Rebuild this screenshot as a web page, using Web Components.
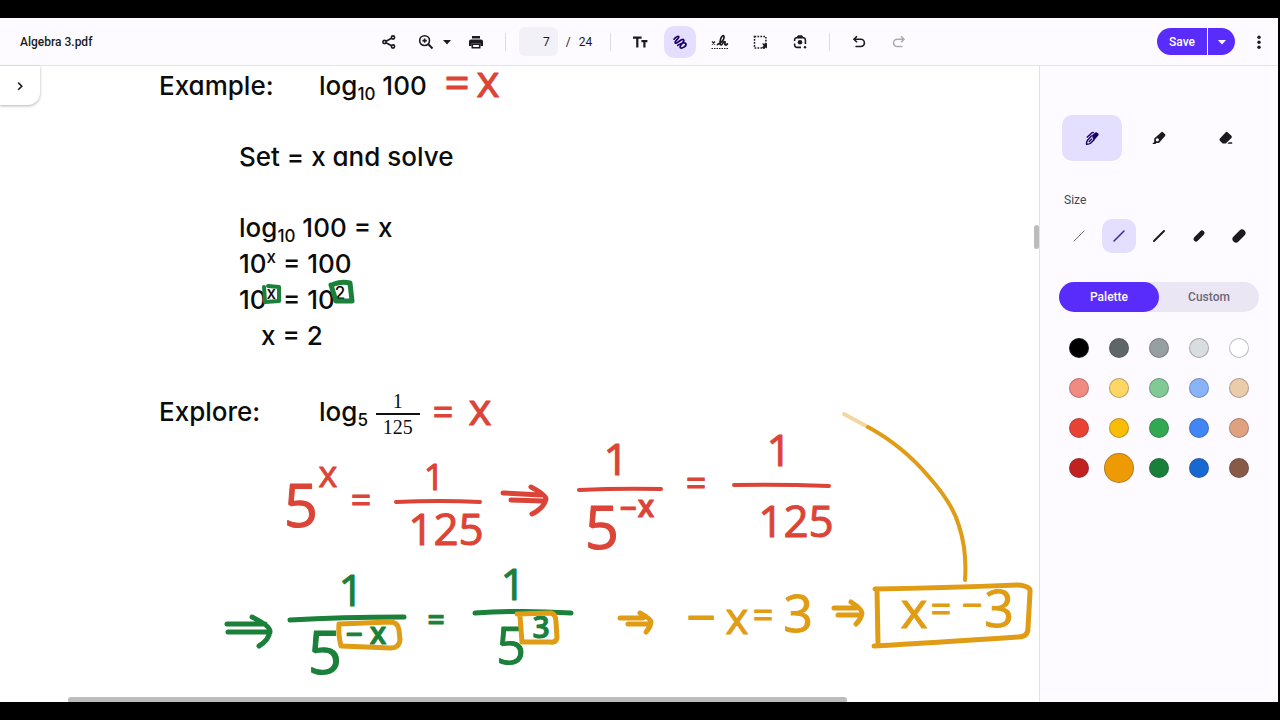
<!DOCTYPE html>
<html lang="en">
<head>
<meta charset="utf-8">
<meta name="viewport" content="width=device-width, initial-scale=1">
<title>Algebra 3.pdf</title>
<style>
  body {
    margin: 0;
    background: #000;
    font-family: Roboto, "Liberation Sans", sans-serif;
  }
</style>
</head>
<body>
<pdf-app>
  <pdf-toolbar slot="toolbar" name="Algebra 3.pdf" page="7" pages="24"></pdf-toolbar>
  <pdf-page slot="page">
    <ink-layer slot="ink"></ink-layer>
  </pdf-page>
  <ink-panel slot="panel"></ink-panel>
</pdf-app>

<script>
/**
 * html is a template tag used to construct a <template>.
 * @param {TemplateStringsArray} strings
 */
function html(strings, ...values) {
  const template = document.createElement("template");
  template.innerHTML = String.raw(strings, ...values);
  return template;
}

function mount(el, template) {
  el.attachShadow({ mode: "open" }).appendChild(template.content.cloneNode(true));
}

// Icons are drawn on a 20px grid, "s" = stroked, "f" = filled.
const icons = {
  share: `<g class="s"><circle cx="5.500" cy="10" r="1.600"/><circle cx="14" cy="5.500" r="1.600"/><circle cx="14" cy="14.500" r="1.600"/><path d="M7 9.200l5.500-3M7 10.800l5.500 3"/></g>`,
  zoom: `<g class="s"><circle cx="8.6" cy="8.6" r="4.9"/><path d="M12.3 12.3l4.2 4.2" stroke-width="2"/><path d="M8.6 6.4v4.4M6.4 8.6h4.4"/></g>`,
  caret: `<path class="f" d="M6 8h8l-4 4.500z"/>`,
  print: `<path class="f" d="M6 4h8v2.600H6zM5 7.400h10a2 2 0 0 1 2 2V14h-2.600v-2.600H5.600V14H3V9.400a2 2 0 0 1 2-2z"/><path class="s" d="M6.300 12.200h7.400v3.600H6.300z"/>`,
  text: `<path class="s" stroke-width="2.200" d="M3 5.600h8.600M7.300 5.600v10M11.400 9.200h6M14.400 9.200v6.400"/>`,
  draw: `<path class="s" stroke-linecap="round" stroke-width="1.700" d="M4 7.200C5.500 5.500 7.800 3.600 8.700 4.600C9.900 6 4.200 9.300 5.200 10.900C6.400 12.600 11.400 6.200 13.600 7.600C15.700 9 8.600 13.800 10.300 15.600C11.800 17 16.600 14.200 16 11.900C15.400 9.900 11 10.900 7.800 13.400"/>`,
  sign: `<path class="s" stroke-width="1.200" d="M2 9.500l3 3M5 9.500l-3 3"/><path class="s" stroke-dasharray="1.500 1" stroke-width="1.200" d="M1.500 16.500h17"/><path class="s" stroke-linecap="round" stroke-width="1.700" d="M7.500 12.500c4-1.500 7-5 6.500-8-.5-2-3 0-3.500 3-.6 3-.8 5.500.6 5.500 1.600 0 2-3.500 3.500-3.500 1.300 0-.6 3.500.8 3.500.8 0 1.400-.5 2-1"/>`,
  select: `<path class="s" stroke-dasharray="1.700 1.250" stroke-width="1.500" d="M4.500 4.500h11.400v11.400H4.500z"/><path class="f" d="M12 11.600h5v5l-1.600-1.300-1.800 1.800-1.700-1.700 1.700-1.700z"/>`,
  lens: `<circle class="f" cx="10" cy="10.300" r="2.300"/><circle class="f" cx="15" cy="15.300" r="1.200"/><path class="s" d="M4.600 9V8a2.400 2.400 0 0 1 2.400-2.400h6A2.400 2.400 0 0 1 15.400 8v4M4.600 11.500V13A2.400 2.400 0 0 0 7 15.400h4M7.500 5.200l1-1.200h3l1 1.200"/>`,
  undo: `<path class="s" d="M8 4.300L5 7.300l3 3M5.300 7.300h6.500a3.600 3.600 0 0 1 0 7.200H6.500"/>`,
  redo: `<path class="s" d="M12 4.300l3 3-3 3M14.700 7.300H8.200a3.600 3.600 0 0 0 0 7.200h5.300"/>`,
  more: `<g class="f"><circle cx="10" cy="5.200" r="1.700"/><circle cx="10" cy="10.200" r="1.700"/><circle cx="10" cy="15.200" r="1.700"/></g>`,
  chevron: `<path class="s" d="M8.200 6.600l3.600 3.600-3.600 3.600"/>`,
  pen: `<path class="f" d="M10 7.200l3.300-2.700q1-.7 2 .2l.9.900q.8 1 .1 2L11.500 13z"/><path class="s" stroke-linejoin="round" stroke-width="1.400" d="M9.800 7.600l-4.300 4.600q-1.200 1.400-1 4 2.600.1 4-1l3.600-3.500M4.800 9.600l5.200-4.800q.8-.6 1.800.1M6.800 13.900l3.200-3.200"/>`,
  marker: `<path class="f" fill-rule="evenodd" d="M5.200 10.400l6.800-6a1.500 1.500 0 0 1 2.200 0l1.700 1.700a1.500 1.500 0 0 1 0 2.200l-6 6.800H7.200l-.7.900H3.200l2-2zM8.300 10.200a1.600 1.600 0 1 0 .1 3.200 1.600 1.600 0 0 0-.1-3.200z"/>`,
  eraser: `<path class="f" d="M9.500 4.400a1.700 1.700 0 0 1 2.300 0l3.600 3.400a1.700 1.700 0 0 1 0 2.300l-5.600 5.400H6.600l-2.700-2.700a1.700 1.700 0 0 1 0-2.300zM12.800 14.200h3.400v1.500h-4.800z"/>`,
};

class AppIcon extends HTMLElement {
  static observedAttributes = ["name"];

  constructor() {
    super();
    this.attachShadow({ mode: "open" });
  }

  attributeChangedCallback(attr, old, name) {
    this.shadowRoot.innerHTML = `
      <style>
        :host { display: block; width: 20px; height: 20px; }
        svg { display: block; }
        .s { fill: none; stroke: currentColor; }
        .f { fill: currentColor; }
      </style>
      <svg width="20" height="20" viewBox="0 0 20 20" stroke-width="1.600" aria-hidden="true">${icons[name] || ""}</svg>
    `;
  }
}
customElements.define("app-icon", AppIcon);

const iconButton = html`
  <style>
    :host {
      display: block;
      width: 32px;
      height: 32px;
    }

    button {
      display: flex;
      align-items: center;
      justify-content: center;
      width: 100%;
      height: 100%;
      padding: 0;
      border: 0;
      border-radius: 10px;
      background: none;
      color: #1b1b1f;
    }

    app-icon {
      flex: none;
    }

    :host([selected]) button {
      background: #e4dfff;
      color: #190064;
    }

    :host([disabled]) button {
      color: #acabb0;
    }
  </style>
  <button type="button"><app-icon></app-icon></button>
`;

class IconButton extends HTMLElement {
  constructor() {
    super();
    mount(this, iconButton);
    const button = this.shadowRoot.querySelector("button");
    button.setAttribute("aria-label", this.getAttribute("label"));
    button.setAttribute("aria-pressed", this.hasAttribute("selected"));
    button.disabled = this.hasAttribute("disabled");
    button.firstElementChild.setAttribute("name", this.getAttribute("icon"));
  }
}
customElements.define("icon-button", IconButton);

const app = html`
  <style>
    :host {
      display: grid;
      grid-template-rows: auto minmax(0, 1fr);
      grid-template-columns: minmax(0, 1fr) 239px;
      box-sizing: border-box;
      height: 100vh;
      padding: 18px 2px 18px 0;
      background: #000;
    }

    slot[name="toolbar"]::slotted(*) {
      grid-column: 1 / -1;
    }
  </style>
  <slot name="toolbar"></slot>
  <slot name="page"></slot>
  <slot name="panel"></slot>
`;

class PdfApp extends HTMLElement {
  constructor() {
    super();
    mount(this, app);
  }
}
customElements.define("pdf-app", PdfApp);

const toolbar = html`
  <style>
    :host {
      display: grid;
      grid-template-columns: minmax(0, 372fr) auto minmax(0, 362fr);
      align-items: center;
      height: 47px;
      border-bottom: 1px solid #e6e4ea;
      background: #fdfbff;
      color: #1b1b1f;
      font-size: 12px;
    }

    h1 {
      margin: 0;
      padding-left: 20px;
      font-size: 12px;
      font-weight: 500;
    }

    .tools,
    .group,
    .actions {
      display: flex;
      align-items: center;
    }

    .group {
      gap: 8px;
    }

    .zoom {
      gap: 0;
      margin: 0 8px 0 5px;
    }

    .zoom icon-button:last-child {
      width: 10px;
    }

    .rule {
      width: 1px;
      height: 18px;
      margin: 0 13px;
      background: #dddbe2;
    }

    input {
      box-sizing: border-box;
      width: 39px;
      height: 29px;
      padding: 0 8px;
      border: 0;
      border-radius: 6px;
      background: #f3f1f8;
      color: inherit;
      font: inherit;
      text-align: right;
    }

    .count {
      display: flex;
      gap: 8px;
      margin: 0 5px 0 8px;
    }

    .actions {
      justify-content: flex-end;
      gap: 8px;
      padding-right: 3px;
    }

    .split {
      display: flex;
      gap: 1px;
      height: 27px;
    }

    .split button {
      display: flex;
      align-items: center;
      justify-content: center;
      padding: 0;
      border: 0;
      background: #5a2cfb;
      color: #fff;
      font: inherit;
      font-weight: 500;
    }

    .save {
      width: 50px;
      border-radius: 14px 0 0 14px;
    }

    .options {
      width: 27px;
      border-radius: 0 14px 14px 0;
    }
  </style>
  <h1></h1>
  <div class="tools">
    <icon-button icon="share" label="Share"></icon-button>
    <div class="group zoom">
      <icon-button icon="zoom" label="Zoom in"></icon-button>
      <icon-button icon="caret" label="Zoom levels"></icon-button>
    </div>
    <icon-button icon="print" label="Print"></icon-button>
    <span class="rule"></span>
    <input type="text" aria-label="Page number">
    <div class="count"><span>/</span><span class="total"></span></div>
    <span class="rule"></span>
    <div class="group">
      <icon-button icon="text" label="Add text"></icon-button>
      <icon-button icon="draw" label="Draw" selected></icon-button>
      <icon-button icon="sign" label="Signature"></icon-button>
      <icon-button icon="select" label="Select area"></icon-button>
      <icon-button icon="lens" label="Search image"></icon-button>
    </div>
    <span class="rule"></span>
    <div class="group">
      <icon-button icon="undo" label="Undo"></icon-button>
      <icon-button icon="redo" label="Redo" disabled></icon-button>
    </div>
  </div>
  <div class="actions">
    <div class="split">
      <button class="save" type="button">Save</button>
      <button class="options" type="button" aria-label="Save options"><app-icon name="caret"></app-icon></button>
    </div>
    <icon-button icon="more" label="More actions"></icon-button>
  </div>
`;

class PdfToolbar extends HTMLElement {
  constructor() {
    super();
    mount(this, toolbar);
    this.shadowRoot.querySelector("h1").textContent = this.getAttribute("name");
    this.shadowRoot.querySelector("input").value = this.getAttribute("page");
    this.shadowRoot.querySelector(".total").textContent = this.getAttribute("pages");
  }
}
customElements.define("pdf-toolbar", PdfToolbar);

const fraction = html`
  <style>
    :host {
      display: inline-flex;
      flex-direction: column;
      width: 44px;
      margin-left: 1px;
      vertical-align: middle;
      font: 20px/24px "Liberation Serif", serif;
      text-align: center;
    }

    .top {
      border-bottom: 2px solid #111;
    }
  </style>
  <span class="top"><slot name="top"></slot></span>
  <span><slot name="bottom"></slot></span>
`;

class MathFraction extends HTMLElement {
  constructor() {
    super();
    mount(this, fraction);
  }
}
customElements.define("math-fraction", MathFraction);

const page = html`
  <style>
    :host {
      position: relative;
      display: block;
      background: #fff;
      color: #0c0c0c;
      font: 500 26px/36px Inter, sans-serif;
      font-feature-settings: "cv11";
    }

    article {
      display: flex;
      flex-direction: column;
      gap: 35px;
      padding: 2px 0 0 159px;
    }

    p {
      margin: 0;
    }

    .row {
      display: grid;
      grid-template-columns: 160px auto;
      align-items: baseline;
    }

    .steps {
      padding-left: 80px;
    }

    .last {
      padding-left: 22px;
    }

    sub,
    sup {
      font-size: 17px;
      line-height: 0;
    }

    sub {
      vertical-align: -5px;
    }

    sup {
      vertical-align: 10px;
    }

    .expand {
      position: absolute;
      top: 0;
      left: 0;
      display: flex;
      align-items: center;
      justify-content: center;
      width: 40px;
      height: 39px;
      padding: 0;
      border: 0;
      border-radius: 0 0 12px 0;
      background: #fff;
      box-shadow: 0 1px 3px rgba(0, 0, 0, 0.3);
      color: #1b1b1f;
    }

    .bar {
      position: absolute;
      background: #bcbcbe;
    }

    .vertical {
      top: 25%;
      right: 0;
      width: 5px;
      height: 24px;
      border-radius: 3px;
    }

    .horizontal {
      bottom: 0;
      left: 6.5%;
      width: 75%;
      height: 5px;
      border-radius: 3px 3px 0 0;
    }
  </style>
  <article>
    <div class="row"><p>Example:</p><p>log<sub>10</sub> 100</p></div>
    <div class="steps"><p>Set = x and solve</p></div>
    <div class="steps">
      <p>log<sub>10</sub> 100 = x</p>
      <p>10<sup>x</sup> = 100</p>
      <p>10<sup>x</sup> = 10<sup>2</sup></p>
      <p class="last">x = 2</p>
    </div>
    <div class="row">
      <p>Explore:</p>
      <p>log<sub>5</sub> <math-fraction><span slot="top">1</span><span slot="bottom">125</span></math-fraction></p>
    </div>
  </article>
  <slot name="ink"></slot>
  <button class="expand" type="button" aria-label="Show sidebar"><app-icon name="chevron"></app-icon></button>
  <span class="bar vertical"></span>
  <span class="bar horizontal"></span>
`;

class PdfPage extends HTMLElement {
  constructor() {
    super();
    mount(this, page);
  }
}
customElements.define("pdf-page", PdfPage);

// Annotations lie freely over the page: symbols are text, bars, arrows and frames are strokes.
const ink = html`
  <style>
    :host {
      position: absolute;
      inset: 0;
      pointer-events: none;
    }

    svg {
      display: block;
      overflow: visible;
      font-family: "Open Sans", sans-serif;
      text-anchor: middle;
    }

    path {
      fill: none;
      stroke: var(--ink);
      stroke-width: 4;
      stroke-linecap: round;
      stroke-linejoin: round;
    }

    .wide {
      stroke-width: 5;
    }

    text {
      fill: var(--ink);
      stroke: var(--ink);
      stroke-linejoin: round;
    }

    .red { --ink: #db4437; }
    .green { --ink: #1b8039; }
    .orange { --ink: #e09c14; }
    .xs { font-size: 30px; font-weight: 600; }
    .sm { font-size: 36px; font-weight: 500; }
    .md { font-size: 44px; }
    .lg { font-size: 52px; }
    .xl { font-size: 60px; }
  </style>
  <svg width="1039" height="636" viewBox="0 66 1039 636">
    <g class="red">
      <text class="md" x="457" y="99">=</text>
      <text class="md" x="488" y="97">x</text>
      <text class="sm" x="443" y="425">=</text>
      <text class="md" x="480" y="425">x</text>

      <text class="xl" x="301" y="527">5</text>
      <text class="sm" x="328" y="487">x</text>
      <text class="sm" x="361" y="513">=</text>
      <text class="sm" x="434" y="490">1</text>
      <path d="M396 502Q440 500 480 502"/>
      <text class="md" x="446" y="545">125</text>
      <path class="wide" d="M503 493L541 495M511 500L543 501M531 487Q546 495 546 499Q544 508 532 514"/>

      <text class="md" x="616" y="475">1</text>
      <path d="M579 490Q620 488 661 489"/>
      <text class="xl" x="602" y="549">5</text>
      <text class="xs" x="628" y="519">−</text>
      <text class="xs" x="646" y="517">x</text>
      <text class="sm" x="696" y="496">=</text>
      <text class="md" x="779" y="466">1</text>
      <path d="M734 485Q780 484 829 486"/>
      <text class="md" x="796" y="537">125</text>
    </g>
    <g class="green">
      <path d="M264 287L265 302L279 301L279 287L268 286"/>
      <path class="wide" d="M331 285L336 301L352 301L350 283Q342 281 334 284"/>
      <path class="wide" d="M227 624L265 624M228 632L270 632M252 617Q270 626 270 631Q269 640 259 646"/>
      <text class="md" x="351" y="606">1</text>
      <path class="wide" d="M290 620Q340 617 404 617"/>
      <text class="xl" x="325" y="674">5</text>
      <text class="xs" x="354" y="645">−</text>
      <text class="xs" x="378" y="644">x</text>
      <text class="xs" x="436" y="631">=</text>
      <text class="md" x="513" y="600">1</text>
      <path class="wide" d="M475 613Q520 610 571 613"/>
      <text class="lg" x="511" y="664">5</text>
      <text class="xs" x="541" y="638">3</text>
    </g>
    <g class="orange">
      <path class="wide" d="M339 624L390 622Q398 622 399 630L400 640Q399 648 391 648L341 646Q338 634 339 624"/>
      <path class="wide" d="M517 614L551 613Q556 614 556 622L557 638Q556 643 550 642L522 642L520 616"/>
      <path class="wide" d="M620 618L643 618M628 624L650 624M640 613Q651 619 651 622Q650 628 646 632"/>
      <text class="lg" x="701" y="636">−</text>
      <text class="md" x="737" y="634">x</text>
      <text class="sm" x="763" y="628">=</text>
      <text class="lg" x="798" y="632">3</text>
      <path class="wide" d="M834 608L856 608M838 615L861 615M851 602Q862 609 862 613Q861 619 856 624"/>
      <path class="wide" d="M875 589Q940 588 1018 585Q1031 586 1030 592L1028 628Q1028 637 1018 637Q930 643 874 646M877 590L878 644"/>
      <text class="lg" x="914" y="628">x</text>
      <text class="sm" x="941" y="622">=</text>
      <text class="sm" x="972" y="618">−</text>
      <text class="lg" x="999" y="627">3</text>
      <path d="M868 427Q903 446 929 477Q953 504 959 526Q967 550 965 580"/>
      <path opacity="0.4" d="M844 414L868 427"/>
    </g>
  </svg>
`;

class InkLayer extends HTMLElement {
  constructor() {
    super();
    mount(this, ink);
  }
}
customElements.define("ink-layer", InkLayer);

const swatches = [
  ["Black", "#000000"], ["Dark grey", "#5f6668"], ["Grey", "#969fa1"], ["Light grey", "#d8dedf"], ["White", "#ffffff"],
  ["Light red", "#f18b82"], ["Light yellow", "#fdd663"], ["Light green", "#81c995"], ["Light blue", "#8ab4f8"], ["Light tan", "#eaccab"],
  ["Red", "#e94235"], ["Yellow", "#fabd05"], ["Green", "#32a852"], ["Blue", "#4285f4"], ["Tan", "#e0a181"],
  ["Dark red", "#c1221f"], ["Orange", "#ee9a04"], ["Dark green", "#188038"], ["Dark blue", "#1868d2"], ["Brown", "#885b46"],
];

const sizes = [1, 2, 3, 5, 7];

const panel = html`
  <style>
    :host {
      display: flex;
      flex-direction: column;
      padding: 49px 19px 0;
      border-left: 1px solid #e2e0e7;
      background: #fdfbff;
      color: #46464f;
      font-size: 12px;
      line-height: 16px;
    }

    .brushes {
      display: grid;
      grid-template-columns: repeat(3, 1fr);
      justify-items: center;
      margin-bottom: 31px;
    }

    .brushes icon-button {
      width: 60px;
      height: 46px;
    }

    fieldset {
      min-width: 0;
      margin: 0;
      padding: 0;
      border: 0;
    }

    legend {
      margin-bottom: 11px;
      padding: 0 0 0 5px;
    }

    .grid {
      display: grid;
      grid-template-columns: repeat(5, 1fr);
      align-items: center;
      justify-items: center;
    }

    input {
      appearance: none;
      margin: 0;
    }

    .size {
      position: relative;
      display: flex;
      border-radius: 10px;
      color: #1b1b1f;
    }

    .size input {
      position: absolute;
      inset: 0;
    }

    .size:has(:checked) {
      background: #e4dfff;
      color: #37289a;
    }

    .tabs {
      display: grid;
      grid-template-columns: 1fr 1fr;
      margin: 29px 0 16px;
      border-radius: 15px;
      background: #ebe6f4;
    }

    .tabs button {
      height: 30px;
      padding: 0;
      border: 0;
      border-radius: 15px;
      background: none;
      color: #6b6877;
      font: inherit;
      font-weight: 500;
    }

    .tabs [aria-selected="true"] {
      background: #5a2cfb;
      color: #fff;
    }

    .colors {
      grid-auto-rows: 40px;
    }

    .colors input {
      box-sizing: border-box;
      width: 20px;
      height: 20px;
      border: 1px solid rgba(70, 70, 80, 0.35);
      border-radius: 50%;
      background: var(--swatch);
    }

    .colors input:checked {
      width: 30px;
      height: 30px;
    }
  </style>
  <div class="brushes">
    <icon-button icon="pen" label="Pen" selected></icon-button>
    <icon-button icon="marker" label="Highlighter"></icon-button>
    <icon-button icon="eraser" label="Eraser"></icon-button>
  </div>
  <fieldset>
    <legend>Size</legend>
    <div class="grid">
      ${sizes.map((size) => `
        <label class="size">
          <input type="radio" name="size" aria-label="Size ${size}" ${size === 2 ? "checked" : ""}>
          <svg width="34" height="34" viewBox="0 0 34 34" stroke="currentColor" stroke-linecap="round" stroke-width="${size === 2 ? 1.5 : size === 3 ? 2 : size}" ${size === 1 ? 'opacity="0.6"' : ""} aria-hidden="true"><path d="${size < 5 ? "M12 22L22 12" : "M14 20L20 14"}"/></svg>
        </label>`).join("")}
    </div>
  </fieldset>
  <div class="tabs" role="tablist">
    <button type="button" role="tab" aria-selected="true">Palette</button>
    <button type="button" role="tab" aria-selected="false">Custom</button>
  </div>
  <div class="grid colors" role="radiogroup" aria-label="Color">
    ${swatches.map(([name, color]) => `<input type="radio" name="color" aria-label="${name}" style="--swatch: ${color}" ${name === "Orange" ? "checked" : ""}>`).join("")}
  </div>
`;

class InkPanel extends HTMLElement {
  constructor() {
    super();
    mount(this, panel);
  }
}
customElements.define("ink-panel", InkPanel);
</script>
</body>
</html>
